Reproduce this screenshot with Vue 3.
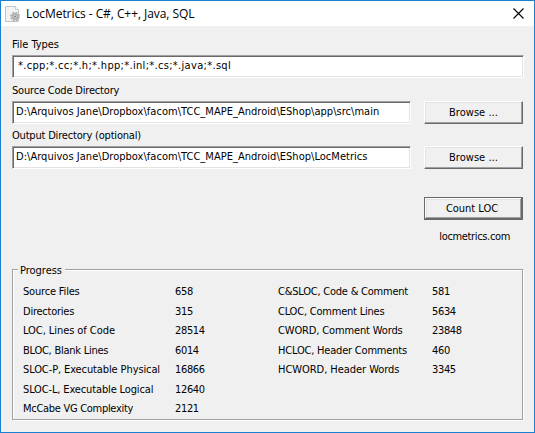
<script setup>
import { ref } from 'vue'

const fileTypes = ref('*.cpp;*.cc;*.h;*.hpp;*.inl;*.cs;*.java;*.sql')
const source = ref('D:\\Arquivos Jane\\Dropbox\\facom\\TCC_MAPE_Android\\EShop\\app\\src\\main')
const output = ref('D:\\Arquivos Jane\\Dropbox\\facom\\TCC_MAPE_Android\\EShop\\LocMetrics')

// label, value, letter spacing of the label
const left = [
  ['Source Files', '658', -0.18],
  ['Directories', '315', -0.24],
  ['LOC, Lines of Code', '28514', -0.06],
  ['BLOC, Blank Lines', '6014', -0.25],
  ['SLOC-P, Executable Physical', '16866', -0.11],
  ['SLOC-L, Executable Logical', '12640', -0.14],
  ['McCabe VG Complexity', '2121', -0.29],
]
const right = [
  ['C&SLOC, Code & Comment', '581', -0.22],
  ['CLOC, Comment Lines', '5634', -0.21],
  ['CWORD, Comment Words', '23848', -0.14],
  ['HCLOC, Header Comments', '460', -0.2],
  ['HCWORD, Header Words', '3345', -0.05],
]
</script>

<template>
  <div class="window">
    <header class="titlebar">
      <svg class="app-icon" width="16" height="18" viewBox="0 0 16 18">
        <path d="M.5 1.5h10l3 3v12H.5z" fill="#f3f3f3" stroke="#c4c4c4" />
        <path d="M10.5 1.5v3h3" fill="#fff" stroke="#cfcfcf" />
        <circle cx="10" cy="11.5" r="4" fill="none" stroke="#b0b0b0" stroke-width="1.8" stroke-dasharray="1.8 1.34" />
        <circle cx="10" cy="11.5" r="2.6" fill="#d4d4d4" stroke="#b0b0b0" stroke-width="1.8" />
        <circle cx="10" cy="11.5" r="1" fill="#858585" />
      </svg>
      <h1 class="title">LocMetrics - C#, C++, Java, SQL</h1>
      <svg class="close" width="11" height="11" viewBox="0 0 11 11">
        <path d="M.5 .5l10 10M10.5 .5l-10 10" stroke="#000" stroke-width="1.1" />
      </svg>
    </header>
    <main class="body">
      <label class="label first">File Types</label>
      <div class="row">
        <div class="field types"><span>{{ fileTypes }}</span></div>
      </div>
      <label class="label second">Source Code Directory</label>
      <div class="row">
        <div class="field"><span>{{ source }}</span></div>
        <button class="btn"><span>Browse ...</span></button>
      </div>
      <label class="label third">Output Directory (optional)</label>
      <div class="row">
        <div class="field"><span>{{ output }}</span></div>
        <button class="btn"><span>Browse ...</span></button>
      </div>
      <div class="actions">
        <button class="btn default"><span>Count LOC</span></button>
        <a class="site">locmetrics.com</a>
      </div>
      <section class="group">
        <h2 class="legend">Progress</h2>
        <dl class="stats">
          <div v-for="[k, v, s] in left" :key="k" class="stat"><dt :style="{ letterSpacing: s + 'px' }">{{ k }}</dt><dd>{{ v }}</dd></div>
        </dl>
        <dl class="stats">
          <div v-for="[k, v, s] in right" :key="k" class="stat"><dt :style="{ letterSpacing: s + 'px' }">{{ k }}</dt><dd>{{ v }}</dd></div>
        </dl>
      </section>
    </main>
  </div>
</template>

<style>
body { margin: 0; }
</style>

<style scoped>
* { box-sizing: border-box; }
.window {
  width: 535px; height: 433px; border: 1px solid #1a80d2; background: #f0f0f0; color: #000;
  font-family: "DejaVu Sans Condensed", "DejaVu Sans", sans-serif; font-stretch: condensed;
  font-size: 11px; line-height: 14px; letter-spacing: -0.35px; white-space: nowrap;
}
.titlebar { height: 25px; background: #fff; display: flex; align-items: center; padding: 0 10px 0 4px; }
.title {
  margin: 0 auto 0 5px; font: 400 12px/16px "Open Sans", "Noto Sans", sans-serif; letter-spacing: -0.07px;
}
.body { display: flex; flex-direction: column; padding: 12px 10px 0 11px; }
.label { height: 14px; margin-bottom: 3px; letter-spacing: -0.19px; }
.first { letter-spacing: -0.05px; }
.second { margin-top: 6px; }
.third { margin-top: 5px; }
.row { display: flex; justify-content: space-between; height: 23px; padding-right: 1px; }
.field {
  width: 399px; height: 23px; padding: 3px 3px; background: #fff; border: 1px solid; letter-spacing: 0.03px;
  border-color: #a0a0a0 #fff #fff #a0a0a0; box-shadow: inset 1px 1px #696969, inset -1px -1px #e3e3e3;
}
.field.types { width: 512px; flex: none; padding-left: 5px; letter-spacing: 0.31px; }
.btn {
  width: 99px; height: 23px; padding: 0; font: inherit; letter-spacing: 0.03px; color: inherit;
  background: #f0f0f0; border: 1px solid; border-radius: 0; border-color: #fff #696969 #696969 #fff;
  box-shadow: inset -1px -1px #a0a0a0, inset 1px 1px #e3e3e3;
}
.btn.default {
  border-color: #696969; letter-spacing: -0.02px; padding-right: 3px;
  box-shadow: inset -1px -1px #696969, inset 1px 1px #fff, inset -2px -2px #a0a0a0, inset 2px 2px #e3e3e3;
}
.actions { display: flex; flex-direction: column; align-items: flex-end; padding-right: 1px; margin-top: 28px; }
.site { margin: 10px 13px 0 0; }
.group {
  display: flex; height: 151px; width: 511px; margin-top: 25px; padding: 15px 0 0 10px; border: 1px solid #a0a0a0;
  box-shadow: 1px 1px #fff, inset 1px 1px #fff; position: relative;
}
.legend {
  position: absolute; top: -6px; left: 5px; margin: 0; padding: 0 3px 0 2px; background: #f0f0f0;
  font-size: 11px; font-weight: 400; letter-spacing: -0.02px;
}
.stats { flex: none; margin: 0; width: 255px; }
.stat { display: flex; height: 19.5px; }
dt { flex: none; width: 152px; }
.stats + .stats dt { width: 154px; }
dd { margin: 0; }
</style>
